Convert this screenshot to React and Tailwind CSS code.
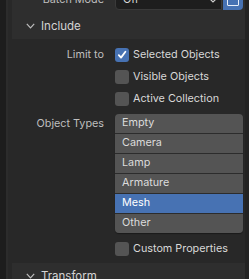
const types = ['Empty', 'Camera', 'Lamp', 'Armature', 'Mesh', 'Other'];

function Chevron() {
  return (
    <svg width="9" height="6" viewBox="0 0 9 6" className="shrink-0">
      <polyline points="0.8,0.8 4.5,4.8 8.2,0.8" fill="none" stroke="#bdbdbd" strokeWidth="1.2" />
    </svg>
  );
}

function Check({ checked, label }) {
  return (
    <div className="flex items-center gap-[4px]">
      <div className={`w-[14px] h-[14px] rounded-[3px] flex items-center justify-center ${checked ? 'bg-[#4772b3]' : 'bg-[#545454]'}`}>
        {checked && (
          <svg width="10" height="10" viewBox="0 0 10 10">
            <polyline points="1.8,5.2 4,7.6 8.4,1.8" fill="none" stroke="#ffffff" strokeWidth="1.8" strokeLinecap="round" strokeLinejoin="round" />
          </svg>
        )}
      </div>
      <span className="text-[#d8d8d8]">{label}</span>
    </div>
  );
}

function Row({ label, children, className = '' }) {
  return (
    <div className={`flex h-[22px] items-center ${className}`}>
      <div className="w-[96px] text-right text-[#bfbfbf]">{label}</div>
      <div className="ml-[11px]">{children}</div>
    </div>
  );
}

function PanelHeader({ title }) {
  return (
    <div className="h-[26px] flex items-center pl-[14px] gap-[6px] bg-[#2e2e2e]">
      <Chevron />
      <span className="text-[#d4d4d4] text-[11.5px] pt-[1px]">{title}</span>
    </div>
  );
}

export default function App() {
  return (
    <div className="flex w-[249px] h-[279px] overflow-hidden bg-[#1d1d1d] text-[10.8px] leading-none" style={{ fontFamily: 'Inter, "Noto Sans", sans-serif' }}>
      <div className="w-[6px] shrink-0" />
      <div className="w-[2px] shrink-0 bg-[#2c2c2c]" />
      <div className="flex-1 flex flex-col bg-[#282828]">
        {/* batch mode (cut off) + Include header */}
        <div className="ml-[4px] -mt-[10px] bg-[#2e2e2e]">
          <div className="flex h-[20px] items-center mb-[3px]">
            <div className="w-[92px] text-right text-[#bfbfbf]">Batch Mode</div>
            <div className="ml-[11px] flex h-[20px]">
              <div className="w-[107px] flex items-center justify-between pl-[7px] pr-[4px] bg-[#1e1e1e] border border-[#3a3a3a] rounded-bl-[4px] text-[#d8d8d8]">
                <span>Off</span>
                <svg width="8" height="5" viewBox="0 0 8 5">
                  <polyline points="0.8,0.8 4,4 7.2,0.8" fill="none" stroke="#cfcfcf" strokeWidth="1.2" />
                </svg>
              </div>
              <div className="w-[20px] ml-[1px] rounded-br-[4px] bg-[#4772b3] flex items-center justify-center">
                <div className="w-[12px] h-[12px] border border-[#e8eef8] rounded-[1px]" />
              </div>
            </div>
          </div>
          <PanelHeader title="Include" />
        </div>

        {/* body */}
        <div className="pt-[5px] pb-[3px]">
          <Row label="Limit to"><Check checked label="Selected Objects" /></Row>
          <Row label="">
            <Check label="Visible Objects" />
          </Row>
          <Row label="">
            <Check label="Active Collection" />
          </Row>
          <div className="flex mt-[4px]">
            <div className="w-[96px] h-[20px] flex items-center justify-end text-[#bfbfbf]">Object Types</div>
            <div className="ml-[11px] w-[128px] rounded-[4px] overflow-hidden bg-[#2c2c2c] flex flex-col gap-[1px] shadow-[0_1px_1px_rgba(0,0,0,0.35)]">
              {types.map((t) => (
                <div key={t} className={`h-[19px] flex items-center pl-[7px] ${t === 'Mesh' ? 'bg-[#4772b3] text-white' : 'bg-[#545454] text-[#dcdcdc]'}`}>
                  {t}
                </div>
              ))}
            </div>
          </div>
          <Row label="" className="mt-[5px]">
            <Check label="Custom Properties" />
          </Row>
        </div>

        <div className="ml-[4px]">
          <PanelHeader title="Transform" />
        </div>
      </div>
      <div className="w-[4px] shrink-0 bg-[#232323]" />
    </div>
  );
}
